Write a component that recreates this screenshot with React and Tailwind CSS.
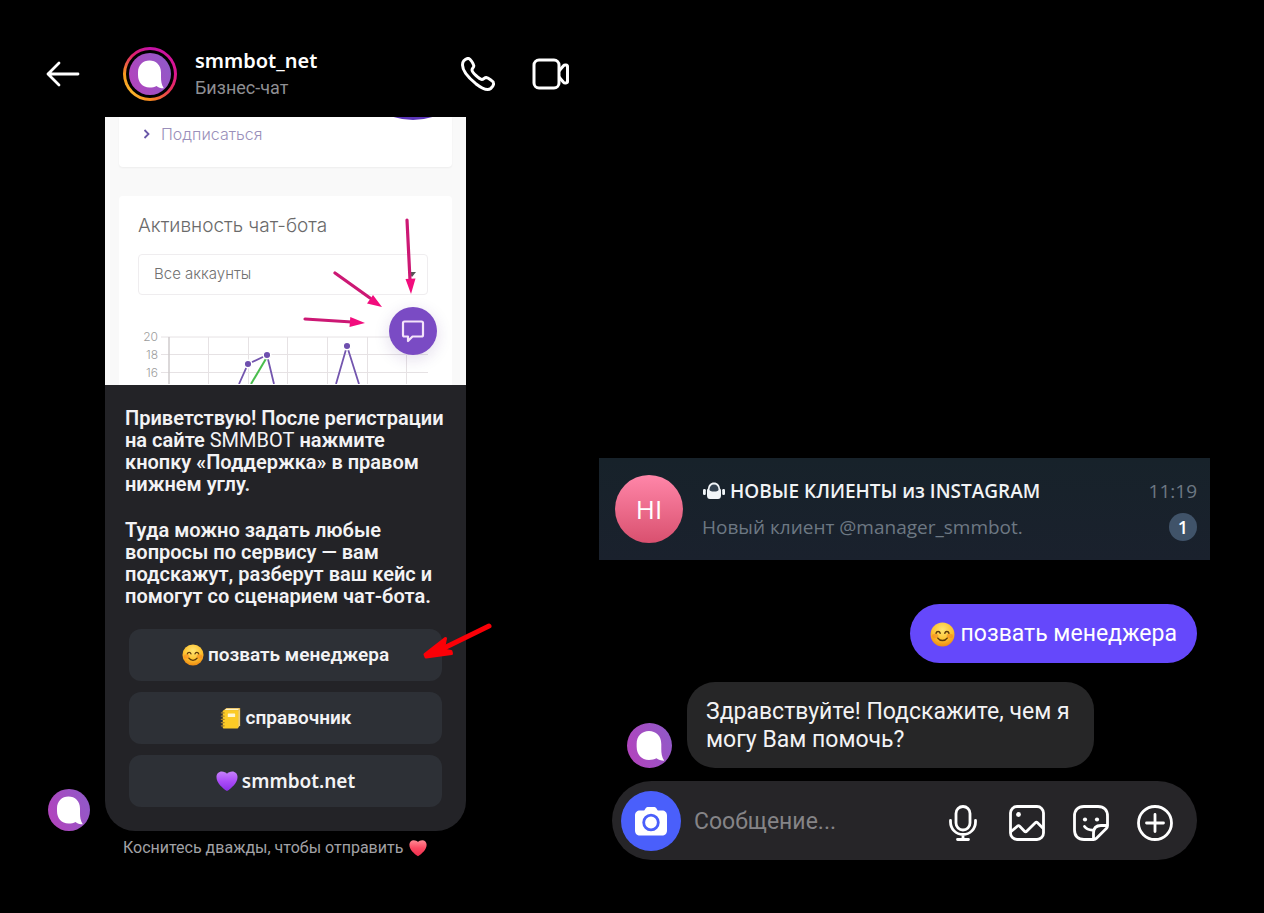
const actions = [
  { id: 'manager', label: 'позвать менеджера', Emoji: SmileEmoji, font: "font-['Roboto','Liberation_Sans',sans-serif]" },
  { id: 'guide', label: 'справочник', Emoji: BookEmoji, font: "font-['Roboto','Liberation_Sans',sans-serif]" },
  { id: 'site', label: 'smmbot.net', Emoji: PurpleHeart, font: "font-['Noto_Sans','Open_Sans',sans-serif]" },
];

function SmileEmoji({ className }) {
  return (
    <svg viewBox="0 0 24 24" className={className} aria-hidden="true">
      <defs>
        <radialGradient id="smileFill" cx="0.5" cy="0.3" r="0.7">
          <stop offset="0" stopColor="#ffe573" />
          <stop offset="0.6" stopColor="#fdc22f" />
          <stop offset="1" stopColor="#ee8a12" />
        </radialGradient>
      </defs>
      <circle cx="12" cy="12" r="11.5" fill="url(#smileFill)" />
      <ellipse cx="5" cy="13.5" rx="3" ry="2.2" fill="#f5761a" opacity="0.45" />
      <ellipse cx="19" cy="13.5" rx="3" ry="2.2" fill="#f5761a" opacity="0.45" />
      <g fill="none" stroke="#5f3a0c" strokeWidth="1.4" strokeLinecap="round">
        <path d="M5.8 10.8c.6-2.2 3.4-2.2 4 0M14.2 10.8c.6-2.2 3.4-2.2 4 0" />
        <path d="M7.5 15.5c2 3 7 3 9 0" />
      </g>
    </svg>
  );
}

function BookEmoji({ className }) {
  return (
    <svg viewBox="0 0 24 24" className={className} aria-hidden="true">
      <path d="M4 3.5 7 1h15v19l-2.5 3z" fill="#d89a1c" />
      <path d="M4.5 3.5 7 1.6h14.5l-2 2z" fill="#fff3c4" />
      <path d="M20 4l1.5-2v18L20 22z" fill="#f1e0a8" />
      <rect x="3" y="3.5" width="17" height="20" rx="1.2" fill="#fccb26" />
      <rect x="8.5" y="7" width="8" height="4" rx="0.5" fill="#fff6cf" />
      <g stroke="#a8842e" strokeWidth="1.3" strokeLinecap="round">
        <path d="M1.5 6.5h3M1.5 10h3M1.5 13.5h3M1.5 17h3M1.5 20.5h3" />
      </g>
    </svg>
  );
}

function PurpleHeart({ className }) {
  return (
    <svg viewBox="0 0 24 24" className={className} aria-hidden="true">
      <defs>
        <linearGradient id="purpleFill" x1="0" y1="0" x2="0" y2="1">
          <stop offset="0" stopColor="#c682fb" />
          <stop offset="0.5" stopColor="#ab4cf8" />
          <stop offset="1" stopColor="#8a2fe6" />
        </linearGradient>
      </defs>
      <path d="M12 23C7 19.5.5 14 .5 7.5.5 4 3 1.5 6.3 1.5c2.4 0 4.600 1 5.700 2.500 1.100-1.500 3.300-2.500 5.700-2.500C21 1.500 23.500 4 23.500 7.500 23.500 14 17 19.500 12 23z" fill="url(#purpleFill)" />
    </svg>
  );
}

function RedHeart({ className }) {
  return (
    <svg viewBox="0 0 24 24" className={className} aria-hidden="true">
      <defs>
        <linearGradient id="redFill" x1="0" y1="0" x2="0" y2="1">
          <stop offset="0" stopColor="#ff8a94" />
          <stop offset="0.5" stopColor="#fb4a62" />
          <stop offset="1" stopColor="#ee2d4c" />
        </linearGradient>
      </defs>
      <path d="M12 23C7 19.5.5 14 .5 7.5.5 4 3 1.5 6.3 1.5c2.4 0 4.600 1 5.700 2.500 1.100-1.500 3.300-2.500 5.700-2.500C21 1.500 23.500 4 23.500 7.500 23.500 14 17 19.500 12 23z" fill="url(#redFill)" />
    </svg>
  );
}

function BotAvatar({ className }) {
  return (
    <svg viewBox="0 0 42 42" className={className} role="img" aria-label="smmbot_net">
      <defs>
        <linearGradient id="botFill" x1="0" y1="0.7" x2="1" y2="0.3">
          <stop offset="0" stopColor="#b244bd" />
          <stop offset="1" stopColor="#9159c8" />
        </linearGradient>
      </defs>
      <circle cx="21" cy="21" r="21" fill="url(#botFill)" />
      <path
        d="M20.5 7.500C27 7.500 32 12 32 19.500v4.500c0 4 .4 7.800 2.800 11.200-3.300 0-5.500-.8-7.300-2.300-2 1.100-4.200 1.600-7 1.600C13.500 34.500 9 29.500 9 22v-2.500C9 12 14 7.500 20.500 7.500z"
        fill="#fff"
      />
    </svg>
  );
}

function ChatHeader() {
  return (
    <header className="flex items-center pt-[47px] pb-4 pl-[46px] pr-[29px] text-white">
      <button type="button" aria-label="Назад" className="shrink-0">
        <svg viewBox="0 0 34 26" className="w-[34px] h-[26px]" fill="none" stroke="#fff" strokeWidth="2.8" strokeLinecap="round" strokeLinejoin="round">
          <path d="M32 13H2M13 2 2 13l11 11" />
        </svg>
      </button>
      <div className="ml-[43px] size-[54px] shrink-0 rounded-full p-[3px] bg-[conic-gradient(#c412a8,#dd1590_25%,#e8305a_35%,#f78a1e_50%,#fbb32c_62%,#f79a1e_75%,#e0206c_88%,#c412a8)]">
        <div className="size-full rounded-full bg-black p-[3px]">
          <BotAvatar className="size-full" />
        </div>
      </div>
      <div className="ml-[18px] grow">
        <h1 className="font-['Noto_Sans','Open_Sans',sans-serif] text-[20px] leading-7 font-semibold">smmbot_net</h1>
        <p className="text-[18px] leading-[26px] text-[#8f8f93]">Бизнес-чат</p>
      </div>
      <div className="flex items-center gap-[37px]">
        <button type="button" aria-label="Позвонить">
          <svg viewBox="0 0 34 34" className="size-[34px]" fill="none" stroke="#fff" strokeWidth="3" strokeLinejoin="round">
            <path d="M2.800 3.800C4 2.500 6.500 1.200 7.800 1.500c1.600.4 4.700 5.300 5 7.200.2 1.600-1.800 2.600-1.800 4.200 0 2.300 7 9.300 9.800 9.500 1.700.1 2.700-1.900 4.400-1.800 2 .2 7 3.700 7.300 5.200.4 1.700-1.300 4.400-2.800 5.700-2.500 2-7.400 1-14.900-4.800C6 19.500 1.500 12.500 1.500 8c0-1.800.4-3.200 1.300-4.200z" />
          </svg>
        </button>
        <button type="button" aria-label="Видеозвонок">
          <svg viewBox="0 0 38 32" className="w-[38px] h-8" fill="none" stroke="#fff" strokeWidth="3" strokeLinejoin="round">
            <rect x="2" y="2" width="25" height="28" rx="5" />
            <path d="M27 13l4.500-5.300c1-1.100 4-.9 4 .8v15c0 1.700-3 1.900-4 .8L27 19" />
          </svg>
        </button>
      </div>
    </header>
  );
}

function ActivityChart() {
  return (
    <svg viewBox="0 0 290 54" className="block w-full h-[54px]" preserveAspectRatio="xMinYMin slice">
      <g stroke="#e6e2e4" strokeWidth="1">
        <path d="M23 7h267M23 24.500h267M23 42.500h267" />
        <path d="M70.500 7v47M110.500 7v47M149.500 7v47M189.500 7v47M229.500 7v47M268.500 7v47" />
      </g>
      <path d="M31 7v47" stroke="#cfcbcd" strokeWidth="1.5" />
      <g fill="#9c9c9c" fontSize="12" className="font-['Inter','Roboto',sans-serif] font-light" textAnchor="end">
        <text x="20" y="11">20</text>
        <text x="20" y="29">18</text>
        <text x="20" y="47">16</text>
      </g>
      <path d="M129 27 113 54" stroke="#49bd4d" strokeWidth="2" />
      <g fill="none" stroke="#7355ae" strokeWidth="1.8">
        <path d="M101 54 110 34 129 25 136 54M198 54 209 16 221 54" />
      </g>
      <g fill="#6e4fae" stroke="#fff" strokeWidth="1.5">
        <circle cx="110" cy="34" r="3.8" />
        <circle cx="129" cy="25" r="3.8" />
        <circle cx="209" cy="16" r="3.8" />
      </g>
    </svg>
  );
}

function PinkArrows() {
  return (
    <svg viewBox="0 0 361 268" className="absolute inset-0 size-full pointer-events-none" aria-hidden="true">
      <g stroke="#cc1874" strokeWidth="3.2" strokeLinecap="round">
        <path d="M302 103 305 163M230 156 265 181M200 202 247 205" />
      </g>
      <g fill="#f20d7d">
        <path d="M306 177 300.500 162l10-.5zM277 190 262 186.500l6-8.500zM260 206 244.500 210l.8-10z" />
      </g>
    </svg>
  );
}

function DashboardPreview() {
  return (
    <div className="relative flex h-[268px] flex-col gap-[29px] overflow-hidden bg-[#f9f9f9] px-[14px] font-['Inter','Roboto',sans-serif] font-light">
      <div className="h-[50px] shrink-0 rounded-b bg-white pl-6 pt-[7px] shadow-xs">
        <a href="#subscribe" className="flex items-center gap-[10px] text-[16px] leading-5 text-[#9a8fba]">
          <svg viewBox="0 0 8 10" className="w-2 h-[10px]" fill="none" stroke="#6a58a8" strokeWidth="1.8">
            <path d="M1.500 1 5.500 5l-4 4" />
          </svg>
          Подписаться
        </a>
      </div>
      <div className="grow rounded-t bg-white pl-[19px] pr-6 pt-4">
        <h2 className="text-[19px] leading-7 text-[#6a6a6a]">Активность чат-бота</h2>
        <div className="relative mt-[14px]">
          <select aria-label="Аккаунты" className="block h-[41px] w-full appearance-none rounded border border-[#efedef] bg-white px-[15px] text-[15px] text-[#717171]">
            <option>Все аккаунты</option>
          </select>
          <svg viewBox="0 0 8 5" className="absolute right-3 top-[18px] w-2 h-[5px]" fill="#555">
            <path d="M0 0h8L4 5z" />
          </svg>
        </div>
        <div className="mt-[35px]">
          <ActivityChart />
        </div>
      </div>
      <div className="absolute -top-[125px] -right-[11px] size-32 rounded-full bg-[#5a35b8]" />
      <button type="button" aria-label="Поддержка" className="absolute bottom-[30px] right-[29px] grid size-12 place-items-center rounded-full bg-[#7a4bc4] shadow-[0_4px_16px_rgba(60,20,120,0.15)]">
        <svg viewBox="0 0 24 24" className="size-6" fill="none" stroke="#f4e4fa" strokeWidth="2.2" strokeLinejoin="round">
          <path d="M3.500 2.500h17a1.500 1.500 0 0 1 1.500 1.500v12a1.500 1.500 0 0 1-1.500 1.500h-9L7 22v-4.500H3.500A1.500 1.500 0 0 1 2 16V4a1.500 1.500 0 0 1 1.500-1.500z" />
        </svg>
      </button>
      <PinkArrows />
    </div>
  );
}

function BotCard() {
  return (
    <article className="min-w-0 max-w-[361px] grow overflow-hidden rounded-b-[30px] bg-[#232327]">
      <DashboardPreview />
      <div className="flex flex-col gap-6 px-5 pt-[22px] text-[20px] leading-[22px] font-semibold text-[#f3f3f5]">
        <p>
          Приветствую! После регистрации
          <br />
          на сайте <span className="font-normal">SMMBOT</span> нажмите
          <br />
          кнопку «Поддержка» в правом
          <br />
          нижнем углу.
        </p>
        <p>
          Туда можно задать любые
          <br />
          вопросы по сервису — вам
          <br />
          подскажут, разберут ваш кейс и
          <br />
          помогут со сценарием чат-бота.
        </p>
      </div>
      <div className="flex flex-col gap-[11px] px-6 pt-[22px] pb-6">
        {actions.map(({ id, label, Emoji, font }) => (
          <button
            key={id}
            type="button"
            className={`flex h-[52px] items-center justify-center gap-1 rounded-xl bg-[#2d3036] text-[19px] font-semibold text-[#f3f3f5] ${font}`}
          >
            <Emoji className="size-[22px]" />
            {label}
          </button>
        ))}
      </div>
    </article>
  );
}

function RedArrow() {
  return (
    <svg viewBox="0 0 76 44" className="absolute -right-[30px] bottom-[167px] w-[76px] h-11 pointer-events-none" aria-hidden="true">
      <path
        d="M69 6 22 29"
        fill="none"
        stroke="#fb0007"
        strokeWidth="5"
        strokeLinecap="round"
      />
      <path
        d="M5 34.500 25.500 18.500 24 26l-1 4 8 1.500.5 2L6 37z"
        fill="#fb0007"
        stroke="#fb0007"
        strokeWidth="3"
        strokeLinejoin="round"
      />
    </svg>
  );
}

function Notification() {
  return (
    <article className="flex h-[102px] items-center bg-linear-to-b from-[#17222a] to-[#1a212d] pl-4 pr-[13px] font-['Open_Sans','Noto_Sans',sans-serif]">
      <div className="grid size-[68px] shrink-0 place-items-center rounded-full bg-linear-to-b from-[#ff86a9] to-[#d9506f] text-[26px] font-medium text-white">
        НІ
      </div>
      <div className="ml-[19px] min-w-0 grow">
        <div className="flex h-9 items-center">
          <svg viewBox="0 0 24 20" className="mr-1 w-6 h-5 shrink-0" aria-hidden="true">
            <rect x="1" y="8" width="2.8" height="6" rx="1.2" fill="#f1f5f8" />
            <rect x="20.200" y="8" width="2.800" height="6" rx="1.200" fill="#f1f5f8" />
            <path d="M12 1.500C8.500 1.500 6.300 4 6 7.500 5.200 8 5 8.800 5 10v4.500C5 17 6.200 18 8 18h8c1.800 0 3-1 3-3.500V10c0-1.200-.2-2-1-2.500-.3-3.500-2.500-6-6-6z" fill="#f1f5f8" />
            <path d="M12 3.500c-2.800 0-4.500 2-4.500 5 0 1.500 1.500 2 4.500 2s4.500-.5 4.500-2c0-3-1.700-5-4.500-5z" fill="#344250" />
          </svg>
          <h2 className="grow truncate text-[19px] font-semibold text-[#f1f3f5]">НОВЫЕ КЛИЕНТЫ из INSTAGRAM</h2>
          <time className="text-[19px] text-[#6d7883]">11:19</time>
        </div>
        <div className="flex h-9 items-center">
          <p className="grow truncate text-[19px] text-[#6d7883]">Новый клиент @manager_smmbot.</p>
          <span className="grid size-7 shrink-0 place-items-center rounded-full bg-[#405369] text-[18px] font-semibold text-white">1</span>
        </div>
      </div>
    </article>
  );
}

function Composer() {
  return (
    <form className="mt-[13px] flex h-[79px] items-center rounded-full bg-[#262528] pl-[9px] pr-6" onSubmit={(e) => e.preventDefault()}>
      <button type="button" aria-label="Камера" className="grid size-[60px] shrink-0 place-items-center rounded-full bg-[#4a5ffb]">
        <svg viewBox="0 0 34 30" className="w-[34px] h-[30px]">
          <path d="M11.500 2.500C12.300 1.300 13.200 1 14.300 1h5.400c1.100 0 2 .3 2.800 1.500l.9 1.400c.3.400.7.600 1.200.600H28c3 0 5 2 5 5V24.500c0 3-2 5-5 5H6c-3 0-5-2-5-5V9.500c0-3 2-5 5-5h3.400c.5 0 .9-.2 1.200-.6z" fill="#fff" />
          <circle cx="17" cy="16.500" r="7.300" fill="none" stroke="#4a5ffb" strokeWidth="2.800" />
        </svg>
      </button>
      <input
        type="text"
        aria-label="Сообщение"
        placeholder="Сообщение..."
        className="ml-[13px] min-w-0 grow bg-transparent pt-1 text-[23px] text-white placeholder:text-[#858487] outline-none"
      />
      <div className="flex shrink-0 items-center gap-7 pt-1 text-white">
        <button type="button" aria-label="Голосовое сообщение">
          <svg viewBox="-4 0 36 36" className="size-9" fill="none" stroke="#fff" strokeWidth="2.800" strokeLinecap="round">
            <rect x="7" y="1.500" width="14" height="23.500" rx="7" />
            <path d="M1.500 15.500v1.500C1.500 24 7 29.500 14 29.500S26.500 24 26.500 17v-1.500M14 29.500v5M8.500 34.500h11" />
          </svg>
        </button>
        <button type="button" aria-label="Галерея">
          <svg viewBox="0 0 36 36" className="size-9" fill="none" stroke="#fff" strokeWidth="2.800" strokeLinejoin="round">
            <rect x="1.500" y="1.500" width="33" height="33" rx="6.500" />
            <path d="M1.500 27l6.800-5.800c.8-.7 1.700-.7 2.400 0l4.800 5c.7.7 1.500.7 2.200 0l8.600-8.400c.7-.7 1.500-.7 2.200 0l6 6" />
            <circle cx="9.500" cy="9.500" r="2.400" fill="#fff" stroke="none" />
          </svg>
        </button>
        <button type="button" aria-label="Стикеры">
          <svg viewBox="0 0 36 36" className="size-9" fill="none" stroke="#fff" strokeWidth="2.800" strokeLinejoin="round" strokeLinecap="round">
            <path d="M20.500 34.500H11C5 34.500 1.500 31 1.500 25V11C1.500 5 5 1.500 11 1.500h14c6 0 9.500 3.500 9.500 9.500v9.500c0 1.200-.4 2.200-1.200 3L23.500 33.300c-.8.800-1.800 1.200-3 1.200z" />
            <path d="M20.500 34v-6c0-5 2.500-7.500 7.500-7.500h6M11.500 21.500c2 2.800 5 3.800 9 3.500" />
            <circle cx="12" cy="14.500" r="2.100" fill="#fff" stroke="none" />
            <circle cx="24" cy="14.500" r="2.100" fill="#fff" stroke="none" />
          </svg>
        </button>
        <button type="button" aria-label="Ещё">
          <svg viewBox="0 0 36 36" className="size-9" fill="none" stroke="#fff" strokeWidth="2.800" strokeLinecap="round">
            <circle cx="18" cy="18" r="16.500" />
            <path d="M18 9.500v17M9.500 18h17" />
          </svg>
        </button>
      </div>
    </form>
  );
}

export default function App() {
  return (
    <main className="grid min-h-screen grid-cols-[minmax(0,599fr)_minmax(0,665fr)] bg-black font-['Roboto','Liberation_Sans',sans-serif]">
      <section>
        <ChatHeader />
        <div className="flex items-end gap-[15px] pl-12">
          <BotAvatar className="size-[42px] shrink-0" />
          <div className="relative flex min-w-0 max-w-[361px] grow">
            <BotCard />
            <RedArrow />
          </div>
        </div>
        <p className="mt-[6px] flex items-center gap-[6px] pl-[123px] text-[16px] leading-[22px] text-[#a2a2a6]">
          Коснитесь дважды, чтобы отправить
          <RedHeart className="size-[18px]" />
        </p>
      </section>

      <section className="flex flex-col justify-end pr-[54px] pb-[53px]">
        <Notification />
        <div className="mt-11 px-[13px]">
          <div className="flex justify-end">
            <p className="flex h-[59px] items-center gap-[6px] rounded-full bg-[#6548fb] px-5 pt-[2px] text-[23px] text-white">
              <SmileEmoji className="size-[25px]" />
              позвать менеджера
            </p>
          </div>
          <div className="mt-[19px] flex items-end gap-[15px] pl-[15px]">
            <BotAvatar className="size-[45px] shrink-0" />
            <p className="rounded-[28px] bg-[#262627] pl-[19px] pr-6 pt-4 pb-[14px] text-[23px] leading-7 text-[#f3f3f5]">
              Здравствуйте! Подскажите, чем я
              <br />
              могу Вам помочь?
            </p>
          </div>
          <Composer />
        </div>
      </section>
    </main>
  );
}
